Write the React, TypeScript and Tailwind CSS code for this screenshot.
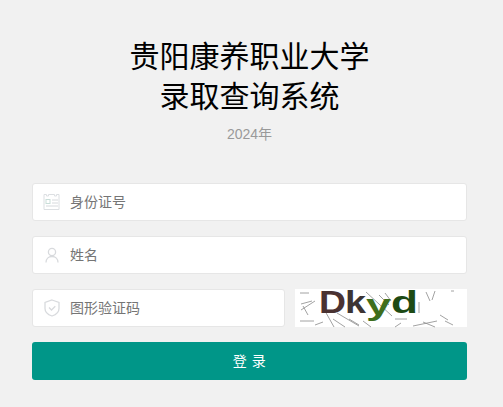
import React from 'react';

const font = "font-['Liberation_Sans','Noto_Sans_CJK_SC',sans-serif]";

const IdIcon: React.FC = () => (
  <svg width="18" height="18" viewBox="0 0 18 18" fill="none" stroke="#dcdfe2" strokeWidth="1">
    <path d="M1 1.500h2.500v1.500h2V1.500h6v1.500h2V1.500h2.500v15H1z" />
    <rect x="3" y="6.500" width="4" height="4" stroke="#c9ddd8" />
    <path d="M9 7h6M9 10h6M3 13h12" stroke="#d6d9dc" />
  </svg>
);

const UserIcon: React.FC = () => (
  <svg width="14" height="16" viewBox="0 0 14 16" fill="none" stroke="#d8dadd" strokeWidth="1.3">
    <circle cx="7" cy="5" r="3.6" />
    <path d="M1 15.500c0-3.600 2.400-6 6-6s6 2.400 6 6" />
  </svg>
);

const ShieldIcon: React.FC = () => (
  <svg width="16" height="18" viewBox="0 0 16 18" fill="none" stroke="#d8dadd" strokeWidth="1.3">
    <path d="M8 1l7 2.400v6c0 3.800-3 6.200-7 7.600-4-1.400-7-3.800-7-7.600v-6z" />
    <path d="M5 8.500l2.500 2.500 3.800-3.800" />
  </svg>
);

const Field: React.FC<{ icon: React.ReactNode; label: string; className?: string }> = ({ icon, label, className }) => (
  <div className={`flex h-[38px] items-center rounded-[3px] border border-[#e6e6e6] bg-white ${className ?? ''}`}>
    <div className="flex w-[37px] shrink-0 justify-center pl-[1px]">{icon}</div>
    <span className="text-[14px] text-[#757575]">{label}</span>
  </div>
);

const Captcha: React.FC = () => (
  <svg className="h-[38px] w-[172px] shrink-0 overflow-visible bg-white" viewBox="0 0 172 38">
    <g stroke="#8a8a8a" strokeWidth="0.8" fill="none">
      <path d="M5 4h9M6 15l11-3M6 21l14-9M8 17l5 9M5 32h14M30 22l9 16M42 24l22 13M38 30l12 8M54 30l10 6" />
      <path d="M71 3l26 24M84 6l10 10M90 4l6 8M100 30h12M124 13v11M131 3l4 9M140 2l-3 9M156 2h3M118 37l24-5M128 33l12 5M150 32l8 4M145 26l8 5" />
      <path d="M20 36l8-3M68 32l8 6M100 38l6-4" />
    </g>
    <text x="24" y="24" textLength="27" lengthAdjust="spacingAndGlyphs" fontFamily="Liberation Sans" fontSize="32" fontWeight="700" fill="#4a3232">D</text>
    <text x="50" y="24" textLength="21" lengthAdjust="spacingAndGlyphs" fontFamily="Liberation Sans" fontSize="31" fontWeight="700" fill="#3c3434">k</text>
    <text x="71" y="26" textLength="25" lengthAdjust="spacingAndGlyphs" fontFamily="Liberation Sans" fontSize="30" fontWeight="700" fill="#3f6e1c">y</text>
    <text x="96" y="24" textLength="27" lengthAdjust="spacingAndGlyphs" fontFamily="Liberation Sans" fontSize="32" fontWeight="700" fill="#1d4a14">d</text>
  </svg>
);

const App: React.FC = () => {
  return (
    <div className={`min-h-screen bg-[#f1f1f1] pl-[32px] pr-[36px] pt-[37px] ${font}`}>
      <h1 className="text-center text-[30px] font-normal leading-[40px] text-black">
        贵阳康养职业大学
        <br />
        录取查询系统
      </h1>
      <p className="mt-[7px] text-center text-[14px] leading-[20px] text-[#999999]">2024年</p>
      <div className="mt-[39px] flex flex-col gap-[15px]">
        <Field icon={<IdIcon />} label="身份证号" />
        <Field icon={<UserIcon />} label="姓名" />
        <div className="flex items-center justify-between">
          <Field icon={<ShieldIcon />} label="图形验证码" className="w-[253px]" />
          <Captcha />
        </div>
      </div>
      <button className="mt-[15px] block h-[38px] w-full rounded-[3px] bg-[#009688] text-[14px] tracking-[0.5px] text-white">
        登 录
      </button>
    </div>
  );
};

export default App;
